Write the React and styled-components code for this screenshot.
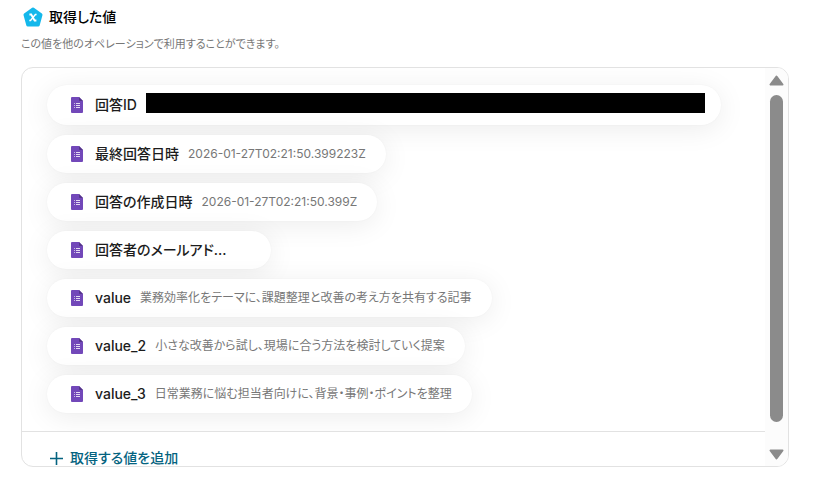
import React, { useRef } from 'react'
import styled, { createGlobalStyle } from 'styled-components'

const values = [
  { name: '回答ID', masked: true },
  { name: '最終回答日時', value: '2026-01-27T02:21:50.399223Z' },
  { name: '回答の作成日時', value: '2026-01-27T02:21:50.399Z' },
  { name: '回答者のメールアド...', wide: true },
  { name: 'value', value: '業務効率化をテーマに、課題整理と改善の考え方を共有する記事' },
  { name: 'value_2', value: '小さな改善から試し、現場に合う方法を検討していく提案' },
  { name: 'value_3', value: '日常業務に悩む担当者向けに、背景・事例・ポイントを整理' }
]

const HeadingIcon = () => (
  <svg width="20" height="20" viewBox="0 0 20 20" aria-hidden="true">
    <path
      d="M10 2 18 7.8 15.2 18H4.8L2 7.8Z"
      fill="#14b8eb" stroke="#14b8eb" strokeWidth="3" strokeLinejoin="round"
    />
    <path
      d="M6.4 7.5h1.8l3.4 6h1.8"
      fill="none" stroke="#fff" strokeWidth="1.8"
    />
    <path
      d="M13.6 7.5h-1.2l-4.9 6h-1.2"
      fill="none" stroke="#fff" strokeWidth="1.4"
    />
  </svg>
)

const FormIcon = () => (
  <svg width="12" height="16" viewBox="0 0 12 16" aria-hidden="true">
    <path d="M1 0h7l4 4v11a1 1 0 0 1-1 1H1a1 1 0 0 1-1-1V1a1 1 0 0 1 1-1Z" fill="#7248b9" />
    <path d="M8 0l4 4H9a1 1 0 0 1-1-1Z" fill="#54358a" />
    <path d="M5 6.5h4M5 8.5h4M5 10.5h4" stroke="#e3daf1" strokeWidth="1" />
    <path d="M3 6.5h1M3 8.5h1M3 10.5h1" stroke="#c7b6e3" strokeWidth="1" />
  </svg>
)

const PlusIcon = () => (
  <svg width="13" height="13" viewBox="0 0 13 13" aria-hidden="true">
    <path d="M6.5 0v13M0 6.5h13" stroke="currentColor" strokeWidth="1.6" />
  </svg>
)

const ArrowIcon = ({ down }) => (
  <svg width="15" height="11" viewBox="0 0 15 11" aria-hidden="true">
    <path
      d={down ? 'M1.5 1.5h12L7.5 9.5Z' : 'M1.5 9.5h12L7.5 1.5Z'}
      fill="#8b8b8b" stroke="#8b8b8b" strokeWidth="2" strokeLinejoin="round"
    />
  </svg>
)

const App = () => {
  const content = useRef(null)
  const scroll = (top) => content.current.scrollBy({ top })

  return (
    <Page>
      <GlobalStyle />
      <Heading>
        <HeadingIcon />
        取得した値
      </Heading>
      <Description>この値を他のオペレーションで利用することができます。</Description>
      <Panel>
        <Content ref={content}>
          <ValueList>
            {values.map(item => (
              <ValueItem key={item.name} $fill={item.masked}>
                <FormIcon />
                <Name $wide={item.wide}>{item.name}</Name>
                {item.masked && <Mask />}
                {item.value && <Value>{item.value}</Value>}
              </ValueItem>
            ))}
          </ValueList>
          <Footer>
            <AddButton type="button">
              <PlusIcon />
              取得する値を追加
            </AddButton>
          </Footer>
        </Content>
        <ScrollBar>
          <ScrollButton type="button" aria-label="上へ" onClick={() => scroll(-40)}>
            <ArrowIcon />
          </ScrollButton>
          <Track>
            <Thumb />
          </Track>
          <ScrollButton type="button" aria-label="下へ" onClick={() => scroll(40)}>
            <ArrowIcon down />
          </ScrollButton>
        </ScrollBar>
      </Panel>
    </Page>
  )
}

const GlobalStyle = createGlobalStyle`
  * {
    box-sizing: border-box;
  }
  body {
    margin: 0;
    background: #fff;
    color: #1c1c1c;
    font-family: Inter, "Noto Sans CJK JP", sans-serif;
    font-feature-settings: "palt";
  }
  svg {
    flex: none;
    display: block;
  }
`

const Page = styled.main`
  padding: 6px 37px 20px 21px;
`

const Heading = styled.h1`
  display: flex;
  align-items: center;
  gap: 6px;
  margin: 0;
  padding-left: 2px;
  font-size: 14px;
  font-weight: 500;
  line-height: 22px;
  color: #000;
`

const Description = styled.p`
  margin: 7px 0 14px;
  font-size: 11px;
  line-height: 18px;
  color: #777;
`

const Panel = styled.section`
  display: flex;
  max-height: 400px;
  border: 1px solid #e2e2e2;
  border-radius: 12px;
  overflow: hidden;
`

const Content = styled.div`
  flex: 1;
  min-width: 0;
  overflow-y: auto;
  scrollbar-width: none;
`

const ValueList = styled.ul`
  display: flex;
  flex-direction: column;
  align-items: flex-start;
  gap: 10px;
  margin: 0;
  padding: 17px 44px 18px 25px;
  list-style: none;
  overflow: hidden;
`

const ValueItem = styled.li`
  display: flex;
  align-items: center;
  gap: 9px;
  max-width: 100%;
  padding: ${props => props.$fill ? '8px 16px 8px 24px' : '8px 20px 8px 24px'};
  align-self: ${props => props.$fill ? 'stretch' : 'flex-start'};
  border-radius: 20px;
  background: #fff;
  box-shadow: 0 4px 28px rgba(0, 0, 0, 0.08), 0 0 2px rgba(0, 0, 0, 0.04);
`

const Name = styled.span`
  min-width: ${props => props.$wide ? '159px' : '0'};
  padding-left: 3px;
  font-size: 14px;
  font-weight: 500;
  line-height: 22px;
  white-space: nowrap;
`

const Value = styled.span`
  overflow: hidden;
  font-size: 12px;
  line-height: 22px;
  color: #777;
  text-overflow: ellipsis;
  white-space: nowrap;
`

const Mask = styled.span`
  flex: 1;
  align-self: flex-start;
  height: 20px;
  margin-bottom: 4px;
  background: #000;
`

const Footer = styled.div`
  padding: 15px 28px;
  border-top: 1px solid #e2e2e2;
`

const AddButton = styled.button`
  display: flex;
  align-items: center;
  gap: 7px;
  padding: 0;
  border: 0;
  background: none;
  color: #046380;
  font: inherit;
  font-feature-settings: inherit;
  font-size: 14px;
  font-weight: 500;
  line-height: 22px;
  cursor: pointer;
`

const ScrollBar = styled.div`
  display: flex;
  flex-direction: column;
  width: 23px;
  background: #fcfcfc;
`

const ScrollButton = styled.button`
  display: flex;
  align-items: center;
  justify-content: center;
  height: 24px;
  padding: 0;
  border: 0;
  background: none;
`

const Track = styled.div`
  flex: 1;
  padding: 3px 5px;
`

const Thumb = styled.div`
  height: 95%;
  border-radius: 7px;
  background: #8b8b8b;
`

export default App
